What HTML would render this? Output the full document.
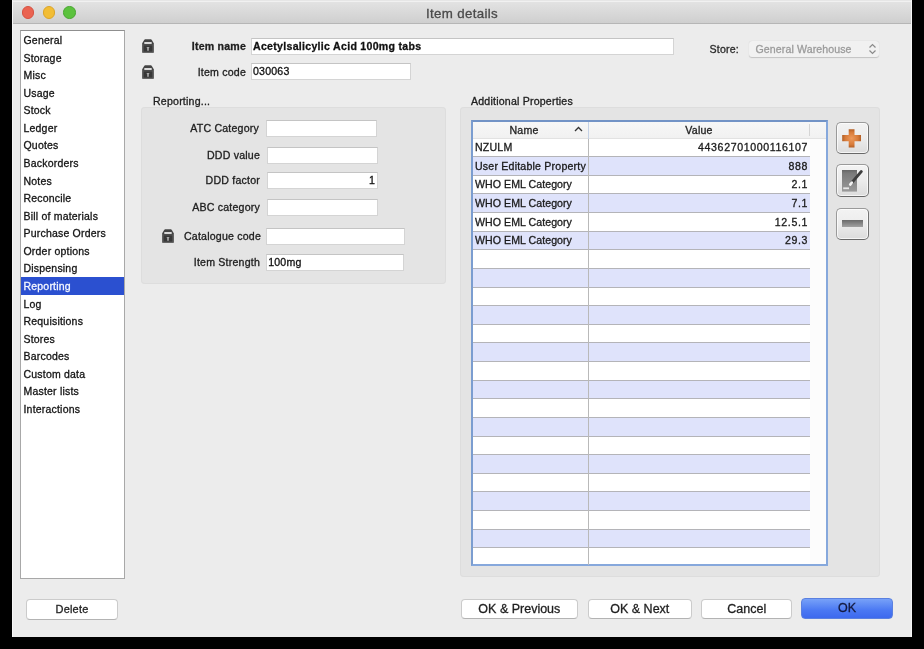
<!DOCTYPE html>
<html><head><meta charset="utf-8">
<style>
*{box-sizing:border-box;margin:0;padding:0}
html,body{width:924px;height:649px;overflow:hidden;background:#000;font-family:"Liberation Sans",sans-serif;color:#1a1a1a}
#root{position:absolute;left:0;top:0;width:924px;height:649px;will-change:transform;-webkit-text-stroke:0.3px currentColor}
.a{position:absolute}
.t13{font-size:10.6px;line-height:13px;letter-spacing:0.2px;white-space:nowrap}
.it{position:absolute;left:21px;width:103px;height:17.6px;font-size:10.5px;line-height:17.6px;padding-left:2.5px;color:#141414;letter-spacing:0.2px;white-space:nowrap}
.sel{color:#f4f7ff}
.lbl{position:absolute;font-size:10.6px;line-height:13px;color:#202020;text-align:right;white-space:nowrap;letter-spacing:0.2px}
.fld{position:absolute;background:#fff;border:1px solid #d4d4d4;border-top-color:#c4c4c4;font-size:10.6px;line-height:15px;padding-left:1px;color:#111;white-space:nowrap;overflow:hidden;letter-spacing:0.2px}
.panel{position:absolute;background:#e4e4e4;border-radius:4px;box-shadow:inset 0 0 0 1px #dddddd}
.btn{position:absolute;background:#fff;border:1px solid #cbcbcb;border-bottom-color:#b3b3b3;border-radius:4px;font-size:12.5px;text-align:center;color:#1f1f1f;line-height:19px;white-space:nowrap}
.th{font-size:10.6px;line-height:13px;color:#222;letter-spacing:0.2px}
.td{font-size:10.6px;line-height:13px;color:#1a1a1a;white-space:nowrap;letter-spacing:0.2px}
.tdv{letter-spacing:0.62px}
.ib{position:absolute;width:32.5px;height:32.5px;border-radius:5px;border:1.8px solid #9a9a9a;border-right-color:#747474;border-bottom-color:#686868;background:linear-gradient(#f3f3f3,#ececec 50%,#dcdcdc);box-shadow:inset 0 0 0 1px rgba(255,255,255,0.7)}
</style></head><body><div id="root">

<div class="a" style="left:12px;top:0;width:900px;height:637px;background:#ececec;overflow:hidden;border-left:1px solid #f6f6f6;border-right:1px solid #f6f6f6">
<div class="a" style="left:-1px;top:0;width:900px;height:24px;background:linear-gradient(#e6e6e6 0,#e6e6e6 1.4px,#f1f1f1 1.5px,#f1f1f1 2.4px,#e2e2e2 2.5px,#cfcfcf 100%);border-bottom:1px solid #b6b6b6"></div>
<div class="a" style="left:8.85px;top:6.3px;width:12.5px;height:12.5px;border-radius:50%;background:#ea6351;border:0.6px solid #d65242"></div>
<div class="a" style="left:29.65px;top:6.3px;width:12.5px;height:12.5px;border-radius:50%;background:#f2bd35;border:0.6px solid #dba52a"></div>
<div class="a" style="left:50.45px;top:6.3px;width:12.5px;height:12.5px;border-radius:50%;background:#5cc23e;border:0.6px solid #4aa632"></div>
<div class="a" style="left:-1px;top:5.7px;width:900px;text-align:center;font-size:13.3px;line-height:15px;color:#4a4a4a;letter-spacing:0.35px;-webkit-text-stroke:0.3px currentColor">Item details</div>
</div>
<div class="a" style="left:20px;top:30px;width:105px;height:549px;background:#fff;border:1px solid #a8a8a8;border-top-color:#8f8f8f"></div>
<div class="a" style="left:21px;top:277.2px;width:103px;height:17.8px;background:#2b50d0"></div>
<div class="it" style="top:32.00px">General</div>
<div class="it" style="top:49.57px">Storage</div>
<div class="it" style="top:67.14px">Misc</div>
<div class="it" style="top:84.71px">Usage</div>
<div class="it" style="top:102.28px">Stock</div>
<div class="it" style="top:119.85px">Ledger</div>
<div class="it" style="top:137.42px">Quotes</div>
<div class="it" style="top:154.99px">Backorders</div>
<div class="it" style="top:172.56px">Notes</div>
<div class="it" style="top:190.13px">Reconcile</div>
<div class="it" style="top:207.70px">Bill of materials</div>
<div class="it" style="top:225.27px">Purchase Orders</div>
<div class="it" style="top:242.84px">Order options</div>
<div class="it" style="top:260.41px">Dispensing</div>
<div class="it sel" style="top:277.98px">Reporting</div>
<div class="it" style="top:295.55px">Log</div>
<div class="it" style="top:313.12px">Requisitions</div>
<div class="it" style="top:330.69px">Stores</div>
<div class="it" style="top:348.26px">Barcodes</div>
<div class="it" style="top:365.83px">Custom data</div>
<div class="it" style="top:383.40px">Master lists</div>
<div class="it" style="top:400.97px">Interactions</div>
<svg class="a" style="left:142px;top:39px" width="12" height="14" viewBox="0 0 12 14"><path d="M3.2 0.3 H8.8 Q9.4 0.3 9.8 0.9 L11.8 4.2 V13.8 H0.2 V4.2 L2.2 0.9 Q2.6 0.3 3.2 0.3 Z" fill="#444"/><rect x="2.3" y="3" width="7.4" height="2" fill="#d9d9d9"/><rect x="1.2" y="6" width="9.6" height="7" fill="#383838" stroke="#5a5a5a" stroke-width="0.8"/><path d="M4.4 8.2 H7.6 L6.6 9.2 V11.8 H5.4 V9.2 Z" fill="#d0d0d0"/></svg>
<svg class="a" style="left:142px;top:65px" width="12" height="14" viewBox="0 0 12 14"><path d="M3.2 0.3 H8.8 Q9.4 0.3 9.8 0.9 L11.8 4.2 V13.8 H0.2 V4.2 L2.2 0.9 Q2.6 0.3 3.2 0.3 Z" fill="#444"/><rect x="2.3" y="3" width="7.4" height="2" fill="#d9d9d9"/><rect x="1.2" y="6" width="9.6" height="7" fill="#383838" stroke="#5a5a5a" stroke-width="0.8"/><path d="M4.4 8.2 H7.6 L6.6 9.2 V11.8 H5.4 V9.2 Z" fill="#d0d0d0"/></svg>
<div class="lbl" style="left:150px;width:96px;top:40px;font-weight:bold;-webkit-text-stroke:0.28px currentColor">Item name</div>
<div class="fld" style="left:251px;top:38px;width:423px;height:17.3px;font-weight:bold;letter-spacing:0.28px;-webkit-text-stroke:0.28px currentColor">Acetylsalicylic Acid 100mg tabs</div>
<div class="lbl" style="left:150px;width:96px;top:66px">Item code</div>
<div class="fld" style="left:251px;top:63.2px;width:160px;height:17.3px">030063</div>
<div class="lbl" style="left:701px;width:38px;top:43px;color:#2a2a2a">Store:</div>
<div class="a" style="left:749px;top:41px;width:130px;height:16px;border-radius:3px;background:#f1f1f1;box-shadow:0 0.5px 1px rgba(0,0,0,0.18)"></div>
<div class="a t13" style="left:755.5px;top:42.8px;color:#9b9b9b;letter-spacing:0.1px">General Warehouse</div>
<svg class="a" style="left:868px;top:43px" width="9" height="12" viewBox="0 0 9 12"><path d="M1.5 4.5 L4.5 1.5 L7.5 4.5 M1.5 7.5 L4.5 10.5 L7.5 7.5" fill="none" stroke="#8a8a8a" stroke-width="1.2"/></svg>
<div class="lbl" style="left:153px;top:95px;text-align:left">Reporting...</div>
<div class="panel" style="left:141px;top:106.6px;width:304.5px;height:177.4px"></div>
<div class="lbl" style="left:139px;width:120px;top:122px">ATC Category</div>
<div class="fld" style="left:265.7px;top:120.4px;width:111px;height:17px;"></div>
<div class="lbl" style="left:140px;width:120px;top:149px">DDD value</div>
<div class="fld" style="left:266.8px;top:147.1px;width:111px;height:17px;"></div>
<div class="lbl" style="left:140px;width:120px;top:174px">DDD factor</div>
<div class="fld" style="left:266.8px;top:171.6px;width:111.4px;height:17px;text-align:right;padding-right:2px">1</div>
<div class="lbl" style="left:140px;width:120px;top:201px">ABC category</div>
<div class="fld" style="left:266.8px;top:198.8px;width:111.4px;height:17px;"></div>
<div class="lbl" style="left:141px;width:120px;top:230px">Catalogue code</div>
<div class="fld" style="left:266.3px;top:227.7px;width:138.3px;height:17px;"></div>
<div class="lbl" style="left:140px;width:120px;top:256px">Item Strength</div>
<div class="fld" style="left:266.2px;top:254.2px;width:138.3px;height:17px;">100mg</div>
<svg class="a" style="left:162px;top:229px" width="12" height="14" viewBox="0 0 12 14"><path d="M3.2 0.3 H8.8 Q9.4 0.3 9.8 0.9 L11.8 4.2 V13.8 H0.2 V4.2 L2.2 0.9 Q2.6 0.3 3.2 0.3 Z" fill="#444"/><rect x="2.3" y="3" width="7.4" height="2" fill="#d9d9d9"/><rect x="1.2" y="6" width="9.6" height="7" fill="#383838" stroke="#5a5a5a" stroke-width="0.8"/><path d="M4.4 8.2 H7.6 L6.6 9.2 V11.8 H5.4 V9.2 Z" fill="#d0d0d0"/></svg>
<div class="lbl" style="left:471px;top:95px;text-align:left">Additional Properties</div>
<div class="panel" style="left:460px;top:106.6px;width:420px;height:470px"></div>
<div class="a" style="left:471px;top:119.5px;width:357px;height:446.5px;background:#fcfcfc;border:2px solid #86a8dc;border-top-color:#7293c6;border-left-color:#7b9dd0"></div>
<div class="a" style="left:473px;top:121.5px;width:353px;height:17px;background:linear-gradient(#f7f7f7,#f1f1f1);border-bottom:1px solid #e2e2e2"></div>
<div class="a" style="left:588px;top:121.5px;width:1px;height:17px;background:#c5d2e6"></div>
<div class="a" style="left:809px;top:124px;width:1px;height:12px;background:#d5d5d5"></div>
<div class="a th" style="left:473px;top:123.5px;width:102px;text-align:center">Name</div>
<svg class="a" style="left:574px;top:126px" width="9" height="6" viewBox="0 0 9 6"><path d="M1 5 L4.5 1.5 L8 5" fill="none" stroke="#333" stroke-width="1.3"/></svg>
<div class="a th" style="left:589px;top:123.5px;width:220px;text-align:center">Value</div>
<div class="a" style="left:473px;top:138.50px;width:337px;height:18.63px;background:#ffffff"></div>
<div class="a" style="left:473px;top:156.13px;width:337px;height:1px;background:#b4b4b8"></div>
<div class="a td" style="left:475px;top:141.00px;">NZULM</div>
<div class="a td tdv" style="left:590px;width:218px;text-align:right;top:141.00px">44362701000116107</div>
<div class="a" style="left:473px;top:157.13px;width:337px;height:18.63px;background:#dfe3fb"></div>
<div class="a" style="left:473px;top:174.76px;width:337px;height:1px;background:#b4b4b8"></div>
<div class="a td" style="left:475px;top:159.63px;">User Editable Property</div>
<div class="a td tdv" style="left:590px;width:218px;text-align:right;top:159.63px">888</div>
<div class="a" style="left:473px;top:175.76px;width:337px;height:18.63px;background:#ffffff"></div>
<div class="a" style="left:473px;top:193.39px;width:337px;height:1px;background:#b4b4b8"></div>
<div class="a td" style="left:475px;top:178.26px;letter-spacing:0.05px;">WHO EML Category</div>
<div class="a td tdv" style="left:590px;width:218px;text-align:right;top:178.26px">2.1</div>
<div class="a" style="left:473px;top:194.39px;width:337px;height:18.63px;background:#dfe3fb"></div>
<div class="a" style="left:473px;top:212.02px;width:337px;height:1px;background:#b4b4b8"></div>
<div class="a td" style="left:475px;top:196.89px;letter-spacing:0.05px;">WHO EML Category</div>
<div class="a td tdv" style="left:590px;width:218px;text-align:right;top:196.89px">7.1</div>
<div class="a" style="left:473px;top:213.02px;width:337px;height:18.63px;background:#ffffff"></div>
<div class="a" style="left:473px;top:230.65px;width:337px;height:1px;background:#b4b4b8"></div>
<div class="a td" style="left:475px;top:215.52px;letter-spacing:0.05px;">WHO EML Category</div>
<div class="a td tdv" style="left:590px;width:218px;text-align:right;top:215.52px">12.5.1</div>
<div class="a" style="left:473px;top:231.65px;width:337px;height:18.63px;background:#dfe3fb"></div>
<div class="a" style="left:473px;top:249.28px;width:337px;height:1px;background:#b4b4b8"></div>
<div class="a td" style="left:475px;top:234.15px;letter-spacing:0.05px;">WHO EML Category</div>
<div class="a td tdv" style="left:590px;width:218px;text-align:right;top:234.15px">29.3</div>
<div class="a" style="left:473px;top:250.28px;width:337px;height:18.63px;background:#ffffff"></div>
<div class="a" style="left:473px;top:267.91px;width:337px;height:1px;background:#b4b4b8"></div>
<div class="a" style="left:473px;top:268.91px;width:337px;height:18.63px;background:#dfe3fb"></div>
<div class="a" style="left:473px;top:286.54px;width:337px;height:1px;background:#b4b4b8"></div>
<div class="a" style="left:473px;top:287.54px;width:337px;height:18.63px;background:#ffffff"></div>
<div class="a" style="left:473px;top:305.17px;width:337px;height:1px;background:#b4b4b8"></div>
<div class="a" style="left:473px;top:306.17px;width:337px;height:18.63px;background:#dfe3fb"></div>
<div class="a" style="left:473px;top:323.80px;width:337px;height:1px;background:#b4b4b8"></div>
<div class="a" style="left:473px;top:324.80px;width:337px;height:18.63px;background:#ffffff"></div>
<div class="a" style="left:473px;top:342.43px;width:337px;height:1px;background:#b4b4b8"></div>
<div class="a" style="left:473px;top:343.43px;width:337px;height:18.63px;background:#dfe3fb"></div>
<div class="a" style="left:473px;top:361.06px;width:337px;height:1px;background:#b4b4b8"></div>
<div class="a" style="left:473px;top:362.06px;width:337px;height:18.63px;background:#ffffff"></div>
<div class="a" style="left:473px;top:379.69px;width:337px;height:1px;background:#b4b4b8"></div>
<div class="a" style="left:473px;top:380.69px;width:337px;height:18.63px;background:#dfe3fb"></div>
<div class="a" style="left:473px;top:398.32px;width:337px;height:1px;background:#b4b4b8"></div>
<div class="a" style="left:473px;top:399.32px;width:337px;height:18.63px;background:#ffffff"></div>
<div class="a" style="left:473px;top:416.95px;width:337px;height:1px;background:#b4b4b8"></div>
<div class="a" style="left:473px;top:417.95px;width:337px;height:18.63px;background:#dfe3fb"></div>
<div class="a" style="left:473px;top:435.58px;width:337px;height:1px;background:#b4b4b8"></div>
<div class="a" style="left:473px;top:436.58px;width:337px;height:18.63px;background:#ffffff"></div>
<div class="a" style="left:473px;top:454.21px;width:337px;height:1px;background:#b4b4b8"></div>
<div class="a" style="left:473px;top:455.21px;width:337px;height:18.63px;background:#dfe3fb"></div>
<div class="a" style="left:473px;top:472.84px;width:337px;height:1px;background:#b4b4b8"></div>
<div class="a" style="left:473px;top:473.84px;width:337px;height:18.63px;background:#ffffff"></div>
<div class="a" style="left:473px;top:491.47px;width:337px;height:1px;background:#b4b4b8"></div>
<div class="a" style="left:473px;top:492.47px;width:337px;height:18.63px;background:#dfe3fb"></div>
<div class="a" style="left:473px;top:510.10px;width:337px;height:1px;background:#b4b4b8"></div>
<div class="a" style="left:473px;top:511.10px;width:337px;height:18.63px;background:#ffffff"></div>
<div class="a" style="left:473px;top:528.73px;width:337px;height:1px;background:#b4b4b8"></div>
<div class="a" style="left:473px;top:529.73px;width:337px;height:18.63px;background:#dfe3fb"></div>
<div class="a" style="left:473px;top:547.36px;width:337px;height:1px;background:#b4b4b8"></div>
<div class="a" style="left:473px;top:548.36px;width:337px;height:16.14px;background:#ffffff"></div>
<div class="a" style="left:588px;top:138.5px;width:1px;height:426px;background:#b9b9b9"></div>
<div class="ib" style="left:836px;top:121.5px"></div>
<svg class="a" style="left:841.5px;top:128.5px" width="19" height="19" viewBox="0 0 19 19"><defs><radialGradient id="og" cx="0.5" cy="0.5" r="0.62"><stop offset="0" stop-color="#ee9a5c"/><stop offset="0.55" stop-color="#d77b3a"/><stop offset="1" stop-color="#9b4c18"/></radialGradient></defs><path d="M6.7 0.3 H12.5 V6.1 H19 V12.3 H12.5 V18.5 H6.7 V12.3 H0.2 V6.1 H6.7 Z" fill="url(#og)"/></svg>
<div class="ib" style="left:836px;top:164px"></div>
<svg class="a" style="left:842px;top:169.8px" width="22" height="22" viewBox="0 0 22 22"><defs><linearGradient id="gg" x1="0" y1="0" x2="0" y2="1"><stop offset="0" stop-color="#666"/><stop offset="0.15" stop-color="#7a7a7a"/><stop offset="1" stop-color="#9a9a9a"/></linearGradient></defs><rect x="0" y="0" width="15" height="21.6" fill="url(#gg)"/><path d="M1.2 18.3 H7" stroke="#e8e8e8" stroke-width="1.8"/><path d="M9.8 12.6 L19.2 1.6" stroke="#3e3e3e" stroke-width="3" stroke-linecap="round"/><path d="M8.2 14.6 L9.8 12.6" stroke="#f2f2f2" stroke-width="2.6" stroke-linecap="round"/></svg>
<div class="ib" style="left:836px;top:207.5px"></div>
<div class="a" style="left:842px;top:219.7px;width:20.7px;height:7.1px;background:linear-gradient(#6a6a6a,#a2a2a2)"></div>
<div class="btn" style="left:26px;top:599px;width:92px;height:20.5px;font-size:11px;letter-spacing:0.2px">Delete</div>
<div class="btn" style="left:460.5px;top:599px;width:117.7px;height:20.3px;line-height:18.5px">OK &amp; Previous</div>
<div class="btn" style="left:587.6px;top:599px;width:104.4px;height:20.3px;line-height:18.5px">OK &amp; Next</div>
<div class="btn" style="left:701.3px;top:599px;width:91px;height:20.3px;line-height:18.5px">Cancel</div>
<div class="btn" style="left:801px;top:598.4px;width:92px;height:20.8px;line-height:19px;color:#141a40;background:linear-gradient(#77a1f8,#4a78f3 60%,#3d69ee);border-color:#5a80e0">OK</div>
</div></body></html>
